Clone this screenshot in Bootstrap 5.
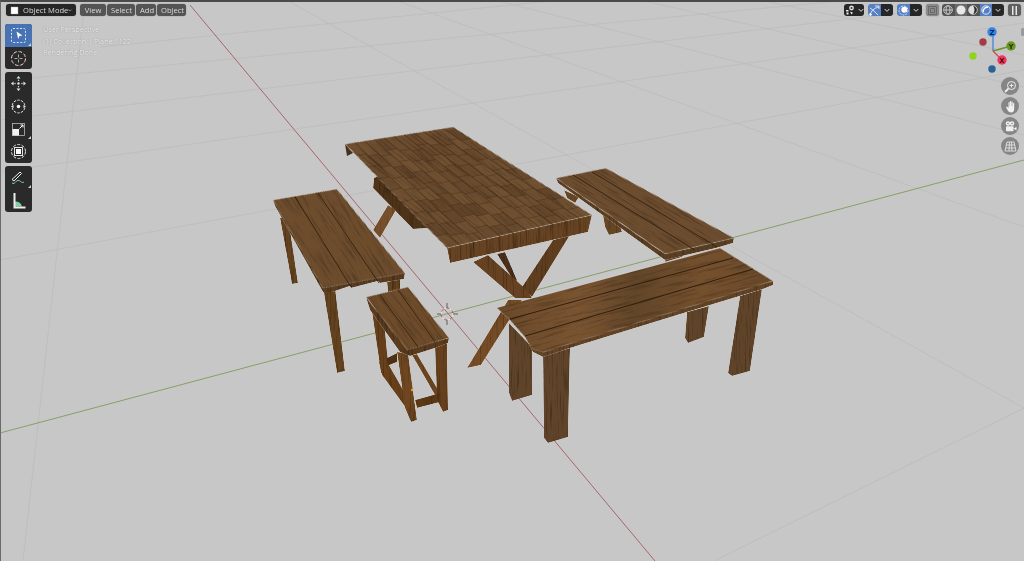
<!DOCTYPE html>
<html lang="en">
<head>
  <meta charset="UTF-8">
  <meta name="viewport" content="width=device-width, initial-scale=1.0">
  <title>Object Mode - User Perspective</title>
  <link href="https://cdn.jsdelivr.net/npm/bootstrap@5.3.0/dist/css/bootstrap.min.css" rel="stylesheet">
  <style>
    html, body { height: 100%; margin: 0; overflow: hidden; }
    body { background: #c7c7c7; font-family: "Open Sans", "Liberation Sans", sans-serif; }

    .viewport { width: 1024px; height: 561px; background: #c7c7c7; border-top: 2px solid #4a4a4a; border-left: 1px solid #6a6a6a; overflow: hidden; }
    .scene { position: absolute; left: -1px; top: -2px; }
    .scene-blur { filter: blur(.35px); }

    /* header */
    .head-bar { position: absolute; left: 5px; top: 2px; width: 1015px; height: 12px; filter: blur(.25px); }
    .bl-btn { height: 12px; padding: 0 4px; border: 0; border-radius: 3px; background: #545454; color: #dcdcdc; font-size: 7.6px; line-height: 12px; white-space: nowrap; box-shadow: 0 0 1px rgba(0,0,0,.5); }
    .bl-dark { background: #262626; }
    .bl-blue { background: #5680c2; }
    .bl-mute { background: #8a8a8a; }
    .bl-icon { width: 13px; padding: 0; }
    .bl-caret { width: 12px; padding: 0; background: #262626; }
    .bl-seg { border-radius: 0; box-shadow: none; }
    .bl-seg:first-child { border-radius: 3px 0 0 3px; }
    .bl-seg:last-child { border-radius: 0 3px 3px 0; }

    /* tools on the left */
    .tool-col { position: absolute; left: 4px; top: 22px; width: 27px; gap: 3px; filter: blur(.25px); }
    .tool-panel { background: #2a2a2a; border-radius: 3px; overflow: hidden; }
    .tool-item { height: 22.7px; position: relative; }
    .tool-on { background: #4772b3; }
    .tool-more::after { content: ""; position: absolute; right: 1px; bottom: 1px; border-style: solid; border-width: 0 0 3px 3px; border-color: transparent transparent #cfcfcf transparent; }

    .info-text { position: absolute; left: 42px; top: 22px; color: #f4f4f4; font-size: 7.2px; line-height: 11.6px; text-shadow: 0 0 1px rgba(40,40,40,.55); }

    /* gizmo and nav */
    .nav-col { position: absolute; right: 5px; top: 75px; width: 18px; gap: 2px; }
    .nav-dot { width: 18px; height: 18px; background: #868686; }
    .gizmo { position: absolute; right: 0; top: 20px; filter: blur(.2px); }
    .gizmo text { font: 700 7px "DejaVu Sans", sans-serif; }
  </style>
</head>
<body>
<div class="viewport position-relative">

  <svg class="scene" width="1024" height="561" viewBox="0 0 1024 561">
    <defs>
      <filter id="grainA" x="-10%" y="-10%" width="120%" height="120%" color-interpolation-filters="sRGB">
        <feTurbulence type="fractalNoise" baseFrequency=".03 .5" numOctaves="4" seed="7" result="n"/>
        <feColorMatrix in="n" type="matrix" values=".75 0 0 0 .62  .75 0 0 0 .62  .75 0 0 0 .62  0 0 0 0 1" result="m"/>
        <feBlend in="SourceGraphic" in2="m" mode="multiply"/>
        <feComposite operator="in" in2="SourceGraphic"/>
        <feGaussianBlur stdDeviation=".4"/>
      </filter>
      <filter id="grainV" x="-10%" y="-10%" width="120%" height="120%" color-interpolation-filters="sRGB">
        <feTurbulence type="fractalNoise" baseFrequency=".6 .03" numOctaves="3" seed="4" result="n"/>
        <feColorMatrix in="n" type="matrix" values=".85 0 0 0 .58  .85 0 0 0 .58  .85 0 0 0 .58  0 0 0 0 1" result="m"/>
        <feBlend in="SourceGraphic" in2="m" mode="multiply"/>
        <feComposite operator="in" in2="SourceGraphic"/>
        <feGaussianBlur stdDeviation=".4"/>
      </filter>
      <linearGradient id="benchShade" x1="0" y1="0" x2="1" y2="0">
        <stop offset="0" stop-color="#6b4a2a"/><stop offset=".3" stop-color="#7a5431"/>
        <stop offset=".5" stop-color="#624629"/><stop offset=".75" stop-color="#75502d"/><stop offset="1" stop-color="#6a4a2b"/>
      </linearGradient>
    </defs>

    <!-- floor grid -->
    <g class="scene-blur" fill="none" stroke="#bababa" stroke-width=".7">
      <path d="M0 260L1024 70M0 172L1024 23M0 120L1000 1M0 81L850 0M100 47L560 0M714 561L1024 408"/>
      <path d="M290 2L1024 408M395 0L1024 227M495 0L1024 135M640 0L1024 87M760 0L1024 55M85 0L23 561"/>
      <path d="M0 433L1024 160" stroke="#86a068" stroke-width="1"/>
      <path d="M190 5L655 561" stroke="#a8666e" stroke-width="1"/>
    </g>

    <!-- right bench -->
    <g filter="url(#grainV)" fill="#674625">
      <polygon points="564,190 579,197 575,203 567,198"/>
      <polygon points="602,210 617,217 622,232 609,235 605,227"/>
      <polygon points="667,252 685,250 682,257 665,262"/>
    </g>
    <polygon filter="url(#grainV)" fill="#5c3f22" points="556,178 558,183 665,260 716,248 733,243 734,238 665,254"/>
    <g filter="url(#grainA)" transform="rotate(32 640 210)">
      <polygon fill="#6d4d2f" transform="rotate(-32 640 210)" points="556,178 606,168 734,238 665,254"/>
    </g>
    <path d="M573 175L695 250M592 172L717 247" stroke="#2a1a0c" stroke-width=".8" fill="none"/>

    <!-- table legs -->
    <g filter="url(#grainV)" fill="#5e3c1e">
      <polygon points="378,176 430,228 413,229 373,188 374,178" fill="#4e3319"/>
      <polygon points="388,205 396,210 380,238 373,230" fill="#76502a"/>
      <polygon points="497,254 505,252 517,280 515,283" fill="#4a2f1c"/>
      <polygon points="473,262 488,255 527,290 532,298 515,298" fill="#664222"/>
      <polygon points="553,240 570,235 532,297 522,287" fill="#5f3e1f"/>
      <polygon points="508,300 522,300 481,365 467,368" fill="#754c26"/>
    </g>

    <!-- table -->
    <polygon filter="url(#grainV)" fill="#664322" points="447,248 592,215 588,232 450,263"/>
    <polygon fill="#46301a" points="345,144 347,156 353,153"/>
    <g filter="url(#grainA)" transform="rotate(39 460 185)">
      <polygon id="tableTop" fill="#6e4e30" transform="rotate(-39 460 185)" points="345,144 453,127 592,215 447,248"/>
    </g>
    <g id="tableCells"></g>
    <g id="tableEdge" stroke="#2d1c0d" stroke-width=".6"></g>

    <!-- left bench -->
    <g filter="url(#grainV)" fill="#62421f">
      <polygon points="280,218 288,216 298,283 292,284"/>
      <polygon points="323,287 335,287 345,371 337,373"/>
      <polygon points="387,282 400,278 400,290 388,292"/>
    </g>
    <polygon filter="url(#grainV)" fill="#5a3d20" points="273,200 275,206 323,292 332,292 350,286 351,288 378,281 380,283 404,279 405,273"/>
    <g filter="url(#grainA)" transform="rotate(57 340 240)">
      <polygon fill="#6e4d2d" transform="rotate(-57 340 240)" points="273,200 337,189 405,273 323,288"/>
    </g>
    <path d="M295 197L351 287M318 193L379 283" stroke="#2a1a0c" stroke-width=".8" fill="none"/>

    <!-- stool -->
    <g filter="url(#grainV)" fill="#66401c">
      <polygon points="383,360 397,353 397,362 387,366" fill="#4d2f14"/>
      <polygon points="412,355 417,354 440,393 435,395" fill="#6c451f"/>
      <polygon points="372,312 385,330 389,373 381,373" fill="#653f1c"/>
      <polygon points="435,345 447,343 448,410 443,412 437,400"/>
      <polygon points="379,362 385,358 406,395 406,408 382,375" fill="#68411b"/>
      <polygon points="415,400 440,393 440,402 417,408" fill="#5c3817"/>
      <polygon points="397,352 408,353 417,420 411,422 405,408" fill="#6e4620"/>
    </g>
    <polygon filter="url(#grainV)" fill="#5a3b1e" points="366,297 370,310 400,352 410,356 435,348 448,343 449,338 407,348"/>
    <g filter="url(#grainA)" transform="rotate(54 408 318)">
      <polygon fill="#6e4c2b" transform="rotate(-54 408 318)" points="366,297 408,287 449,338 407,350"/>
    </g>
    <path d="M380 295L418 347M398 290L435 342" stroke="#2a1a0c" stroke-width=".8" fill="none"/>
    <circle cx="412" cy="390" r="1.2" fill="#f0a030"/>

    <!-- front bench -->
    <g filter="url(#grainV)" fill="#60442a">
      <polygon points="687,312 709,306 704,337 688,343 685,338"/>
      <polygon points="740,296 762,289 750,371 732,376 728,373"/>
      <polygon points="509,323 532,347 532,395 512,401 509,393"/>
      <polygon points="543,355 570,348 568,437 548,443 544,438"/>
    </g>
    <polygon filter="url(#grainV)" fill="#634426" points="497,308 510,320 525,337 533,352 543,357 570,348 687,312 743,295 763,289 773,285 773,281"/>
    <g filter="url(#grainA)" transform="rotate(-15 635 300)">
      <polygon fill="url(#benchShade)" transform="rotate(15 635 300)" points="497,308 720,248 773,281 543,352 533,349 525,337 510,320"/>
    </g>
    <path d="M510 319L733 258M525 336L753 269" stroke="#2a1808" stroke-width=".9" fill="none"/>

    <!-- 3D cursor -->
    <g fill="none" stroke-width="1">
      <circle cx="447" cy="314" r="6" stroke="#ececec" stroke-dasharray="3 3"/>
      <circle cx="447" cy="314" r="6" stroke="#b5564f" stroke-dasharray="3 3" stroke-dashoffset="3"/>
      <path d="M447 303V308M447 320V325M437 314H441M453 314H458" stroke="#444" stroke-width=".8"/>
    </g>
    <rect x="35" y="0" width="12" height="2" fill="#a07d45"/>
  </svg>

  <!-- 3D viewport header -->
  <div class="head-bar d-flex justify-content-between">
    <div class="d-flex gap-1">
      <div class="bl-btn bl-dark d-flex align-items-center" style="width:70px">
        <svg width="9" height="9" viewBox="0 0 9 9" class="me-1 flex-shrink-0"><path d="M1 1h7v7H1z" fill="#fff" stroke="#aaa" stroke-width=".6" stroke-dasharray="1.5 .6"/></svg>
        <span class="flex-grow-1">Object Mode</span>
        <svg width="6" height="5" viewBox="0 0 6 5"><path d="M.7 1l2.3 2.4L5.3 1" fill="none" stroke="#ddd" stroke-width="1"/></svg>
      </div>
      <div class="d-flex" style="gap:1px">
        <div class="bl-btn" style="width:26px;text-align:center">View</div>
        <div class="bl-btn" style="width:28px;text-align:center">Select</div>
        <div class="bl-btn" style="width:20px;text-align:center">Add</div>
        <div class="bl-btn" style="width:29px;text-align:center">Object</div>
      </div>
    </div>
    <div class="d-flex" style="gap:4px">
      <div class="d-flex">
        <div class="bl-btn bl-seg bl-dark bl-icon d-flex align-items-center justify-content-center"><svg width="11" height="10" viewBox="0 0 11 10"><circle cx="6.5" cy="3" r="2.4" fill="#ddd"/><circle cx="6.5" cy="3" r="1" fill="#333"/><path d="M1 5h2.5v1.6H1zM1.5 7.5h2v2h-2zM5 6.5l3 1.2-1.5 1.8" fill="#eee"/></svg></div>
        <div class="bl-btn bl-seg bl-caret d-flex align-items-center justify-content-center" style="width:7px"><svg width="6" height="5" viewBox="0 0 6 5"><path d="M.7 1l2.3 2.4L5.3 1" fill="none" stroke="#ddd"/></svg></div>
      </div>
      <div class="d-flex">
        <div class="bl-btn bl-seg bl-blue bl-icon d-flex align-items-center justify-content-center"><svg width="11" height="11" viewBox="0 0 11 11" fill="none" stroke="#e8eef8" stroke-width=".9"><path d="M1 10C2 6 5 3 10 2M1 3l4 3 4 4M6 1h4v3"/><circle cx="1.5" cy="9.5" r="1" fill="#fff"/></svg></div>
        <div class="bl-btn bl-seg bl-caret d-flex align-items-center justify-content-center"><svg width="6" height="5" viewBox="0 0 6 5"><path d="M.7 1l2.3 2.4L5.3 1" fill="none" stroke="#ddd"/></svg></div>
      </div>
      <div class="d-flex">
        <div class="bl-btn bl-seg bl-blue bl-icon d-flex align-items-center justify-content-center"><svg width="11" height="11" viewBox="0 0 11 11"><circle cx="5.5" cy="5.5" r="4.5" fill="none" stroke="#dfe7f5" stroke-dasharray="2 1"/><circle cx="6.3" cy="4.7" r="3" fill="#fff"/></svg></div>
        <div class="bl-btn bl-seg bl-caret d-flex align-items-center justify-content-center"><svg width="6" height="5" viewBox="0 0 6 5"><path d="M.7 1l2.3 2.4L5.3 1" fill="none" stroke="#ddd"/></svg></div>
      </div>
      <div class="bl-btn bl-mute bl-icon d-flex align-items-center justify-content-center"><svg width="9" height="9" viewBox="0 0 9 9" fill="none" stroke="#5f5f5f" stroke-width=".8"><path d="M.5.5h8v8h-8zM2.5 2.5h4v4h-4z"/></svg></div>
      <div class="d-flex" style="margin-left:-1px">
        <div class="bl-btn bl-seg bl-icon d-flex align-items-center justify-content-center" style="width:12.5px"><svg width="10" height="10" viewBox="0 0 10 10" fill="none" stroke="#ddd" stroke-width=".8"><circle cx="5" cy="5" r="4.3"/><ellipse cx="5" cy="5" rx="2" ry="4.3"/><path d="M.7 5h8.6"/></svg></div>
        <div class="bl-btn bl-seg bl-icon d-flex align-items-center justify-content-center" style="width:12.5px;background:#6a6a6a"><svg width="10" height="10" viewBox="0 0 10 10"><circle cx="5" cy="5" r="4.5" fill="#e8e8e8"/></svg></div>
        <div class="bl-btn bl-seg bl-icon d-flex align-items-center justify-content-center" style="width:12.5px"><svg width="10" height="10" viewBox="0 0 10 10"><circle cx="5" cy="5" r="4.3" fill="#2c2c2c" stroke="#ddd" stroke-width=".8"/><path d="M5 .7A4.3 4.3 0 0 0 5 9.3C7 7 7 3 5 .7z" fill="#ddd"/></svg></div>
        <div class="bl-btn bl-seg bl-blue bl-icon d-flex align-items-center justify-content-center" style="width:12.5px"><svg width="10" height="10" viewBox="0 0 10 10" fill="none"><circle cx="5" cy="5" r="4.2" stroke="#eef" stroke-width=".9"/><path d="M2.3 7A4 4 0 0 1 7 2.3" stroke="#fff" stroke-width="1.4"/></svg></div>
        <div class="bl-btn bl-seg bl-caret d-flex align-items-center justify-content-center"><svg width="6" height="5" viewBox="0 0 6 5"><path d="M.7 1l2.3 2.4L5.3 1" fill="none" stroke="#ddd"/></svg></div>
      </div>
      <div class="bl-btn bl-icon d-flex align-items-center justify-content-center" style="background:#5e5e5e"><svg width="7" height="9" viewBox="0 0 7 9"><path d="M1 0h1.5v9H1zM4.5 0H6v9H4.5z" fill="#e6e6e6"/></svg></div>
    </div>
  </div>

  <!-- tools -->
  <div class="tool-col d-flex flex-column">
    <div class="tool-panel">
      <div class="tool-item tool-on tool-more d-flex align-items-center justify-content-center"><svg width="17" height="17" viewBox="0 0 17 17" fill="none"><rect x="1.500" y="1.500" width="14" height="14" rx="1.500" stroke="#dbe4f3" stroke-dasharray="2 1.500"/><path d="M6.500 4.500l6 4-3 .6-1.300 3z" fill="#fff"/></svg></div>
      <div class="tool-item d-flex align-items-center justify-content-center"><svg width="17" height="17" viewBox="0 0 17 17" fill="none"><circle cx="8.500" cy="8.500" r="7" stroke="#e8e8e8" stroke-dasharray="3.500 2"/><circle cx="8.500" cy="8.500" r="7" stroke="#c2605a" stroke-dasharray="2 5.500" stroke-dashoffset="5"/><path d="M8.500 4.500v3M8.500 9.500v3M4.500 8.500h3M9.500 8.500h3" stroke="#ccc" stroke-width=".8"/></svg></div>
    </div>
    <div class="tool-panel">
      <div class="tool-item d-flex align-items-center justify-content-center"><svg width="17" height="17" viewBox="0 0 17 17" fill="#e6e6e6"><path d="M8.500 1l2 2.600h-4zM8.500 16l2-2.600h-4zM1 8.500l2.600-2v4zM16 8.500l-2.600-2v4z"/><circle cx="8.500" cy="8.500" r="1.200"/><circle cx="5" cy="8.500" r=".7"/><circle cx="12" cy="8.500" r=".7"/><circle cx="8.500" cy="5.300" r=".7"/><circle cx="8.500" cy="11.700" r=".7"/></svg></div>
      <div class="tool-item d-flex align-items-center justify-content-center"><svg width="17" height="17" viewBox="0 0 17 17" fill="none"><path d="M2.200 7A6.500 6.500 0 0 1 14.800 7M2.200 10a6.500 6.500 0 0 0 12.600 0" stroke="#e6e6e6" stroke-dasharray="2.400 1.200"/><circle cx="8.500" cy="8.500" r="1.800" fill="#f2f2f2"/><path d="M1 8.500l2.500-1.800v3.600zM16 8.500l-2.500-1.800v3.600z" fill="#e6e6e6"/></svg></div>
      <div class="tool-item tool-more d-flex align-items-center justify-content-center"><svg width="15" height="15" viewBox="0 0 15 15" fill="none"><rect x="1.500" y="1.500" width="12" height="12" stroke="#b9b9b9" stroke-width=".8"/><rect x="1.500" y="7" width="6.500" height="6.500" fill="#f2f2f2"/><path d="M8.500 6.500L12 3M9.500 3H12V5.500" stroke="#fff" stroke-width="1"/></svg></div>
      <div class="tool-item d-flex align-items-center justify-content-center"><svg width="17" height="17" viewBox="0 0 17 17" fill="none"><circle cx="8.500" cy="8.500" r="7" stroke="#e6e6e6" stroke-dasharray="3 1.500"/><rect x="4.500" y="4.500" width="8" height="8" stroke="#e6e6e6"/><rect x="6" y="6" width="5" height="5" fill="#fff"/></svg></div>
    </div>
    <div class="tool-panel">
      <div class="tool-item tool-more d-flex align-items-center justify-content-center"><svg width="19" height="17" viewBox="0 0 19 17" fill="none"><path d="M3 10.500L11 3l1.500 1.500L5 12z" fill="none" stroke="#eee"/><path d="M3 14c3 2 4-3.500 7-2.500 2 .6 2.500 3 5 1.500" stroke="#8fd0a8" stroke-width="1"/></svg></div>
      <div class="tool-item d-flex align-items-center justify-content-center"><svg width="17" height="17" viewBox="0 0 17 17"><path d="M5 9.500a7 7 0 0 1 7 5H5z" fill="#7fd0a5"/><path d="M3.500 1h2v13.500H15.500V16.500H3.500z" fill="#eeeeee"/></svg></div>
    </div>
  </div>

  <div class="info-text">
    <div>User Perspective</div>
    <div>(1) Collection | Plane.1122</div>
    <div>Rendering Done</div>
  </div>

  <!-- axis gizmo -->
  <svg class="gizmo" width="60" height="55" viewBox="964 22 60 55">
    <path d="M993 51V32" stroke="#3e86dc" stroke-width="1.300"/>
    <path d="M993 51L1011 46" stroke="#6a9420" stroke-width="1.300"/>
    <path d="M993 51L1002 60" stroke="#d84058" stroke-width="1.300"/>
    <circle cx="983" cy="42" r="3.700" fill="#a33a48"/>
    <circle cx="973" cy="56" r="3.700" fill="#8fd31c"/>
    <circle cx="992" cy="69" r="3.700" fill="#2a6296"/>
    <circle cx="992" cy="32" r="4.700" fill="#2f86ea"/>
    <circle cx="1011" cy="46" r="4.700" fill="#6a9622"/>
    <circle cx="1002" cy="60" r="4.700" fill="#f0355a"/>
    <text x="992" y="34.500" text-anchor="middle" fill="#10233c">Z</text>
    <text x="1011" y="48.500" text-anchor="middle" fill="#1d2a08">Y</text>
    <text x="1002" y="62.500" text-anchor="middle" fill="#4a0c18">X</text>
    <rect x="1021" y="28" width="6" height="8" rx="1.500" fill="#9a9a9a"/>
  </svg>

  <!-- nav buttons -->
  <div class="nav-col d-flex flex-column">
    <div class="nav-dot rounded-circle d-flex align-items-center justify-content-center"><svg width="13" height="13" viewBox="0 0 13 13" fill="none" stroke="#eee"><circle cx="7.500" cy="5.500" r="4" stroke-width="1"/><path d="M4.500 8.500L1 12" stroke-width="1.800"/><path d="M7.500 3.500v4M5.500 5.500h4" stroke-width=".9"/></svg></div>
    <div class="nav-dot rounded-circle d-flex align-items-center justify-content-center"><svg width="13" height="13" viewBox="0 0 13 13" fill="#f0f0f0"><path d="M2 7l1-.5 1.500 1.500V2.500a.6.6 0 0 1 1.200 0V6h.3V1.500a.6.6 0 0 1 1.200 0V6h.3V2a.6.6 0 0 1 1.200 0v4.500h.3V3.500a.6.6 0 0 1 1.200 0V9c0 2-1.200 3.500-3 3.500-2 0-3-1-4-3z"/></svg></div>
    <div class="nav-dot rounded-circle d-flex align-items-center justify-content-center"><svg width="13" height="13" viewBox="0 0 13 13" fill="#f0f0f0"><circle cx="4" cy="3.500" r="2.200"/><circle cx="8" cy="3.500" r="2.200"/><rect x="2" y="6.200" width="7.500" height="5" rx=".8"/><path d="M9.500 8.500l3-1.500v3.500z"/><circle cx="4" cy="3.500" r=".8" fill="#868686"/><circle cx="8" cy="3.500" r=".8" fill="#868686"/></svg></div>
    <div class="nav-dot rounded-circle d-flex align-items-center justify-content-center"><svg width="13" height="13" viewBox="0 0 13 13" fill="none" stroke="#eee" stroke-width=".8"><path d="M3 2h7l2 9H1zM5.500 2L5 11M7.500 2L8 11M2.300 5h8.400M1.700 8h9.600"/></svg></div>
  </div>
</div>

<script>
  // table top planks: bilinear grid over the four corners, with a darker or lighter cell here and there
  const A = [345, 144], B = [453, 127], C = [592, 215], D = [447, 248];
  const cols = 11, rows = 9;
  const at = (u, v) => {
    const tx = A[0] + (B[0] - A[0]) * u, ty = A[1] + (B[1] - A[1]) * u;
    const bx = D[0] + (C[0] - D[0]) * u, by = D[1] + (C[1] - D[1]) * u;
    return [tx + (bx - tx) * v, ty + (by - ty) * v];
  };
  const NS = 'http://www.w3.org/2000/svg';
  const cells = document.getElementById('tableCells');
  const edge = document.getElementById('tableEdge');
  let seed = 11;
  const rnd = () => (seed = (seed * 16807) % 2147483647) / 2147483647;
  for (let i = 0; i < cols; i++) {
    for (let j = 0; j < rows; j++) {
      const shift = (i % 3) * 0.02;
      const v0 = Math.max(0, j / rows + shift), v1 = Math.min(1, (j + 1) / rows + shift);
      if (v0 >= 1) continue;
      const p = [at(i / cols, v0), at((i + 1) / cols, v0), at((i + 1) / cols, v1), at(i / cols, v1)];
      const cell = document.createElementNS(NS, 'polygon');
      cell.setAttribute('points', p.map(q => q.join(',')).join(' '));
      const dark = rnd() > 0.5;
      cell.setAttribute('fill', dark ? '#2a1a0c' : '#a88252');
      cell.setAttribute('opacity', (rnd() * (dark ? 0.16 : 0.08)).toFixed(2));
      cells.appendChild(cell);
      if (j > 0) {
        const l = document.createElementNS(NS, 'line');
        l.setAttribute('x1', p[0][0]); l.setAttribute('y1', p[0][1]);
        l.setAttribute('x2', p[1][0]); l.setAttribute('y2', p[1][1]);
        l.setAttribute('opacity', '.4');
        edge.appendChild(l);
      }
    }
    if (i > 0) {
      const s = at(i / cols, 0), e = at(i / cols, 1), f = [e[0] + 0.6, e[1] + 15];
      const l = document.createElementNS(NS, 'path');
      l.setAttribute('d', `M${s[0]} ${s[1]}L${e[0]} ${e[1]}L${f[0]} ${f[1]}`);
      l.setAttribute('fill', 'none');
      l.setAttribute('opacity', '.7');
      edge.appendChild(l);
    }
  }
</script>
<script src="https://cdn.jsdelivr.net/npm/bootstrap@5.3.0/dist/js/bootstrap.bundle.min.js"></script>
</body>
</html>
